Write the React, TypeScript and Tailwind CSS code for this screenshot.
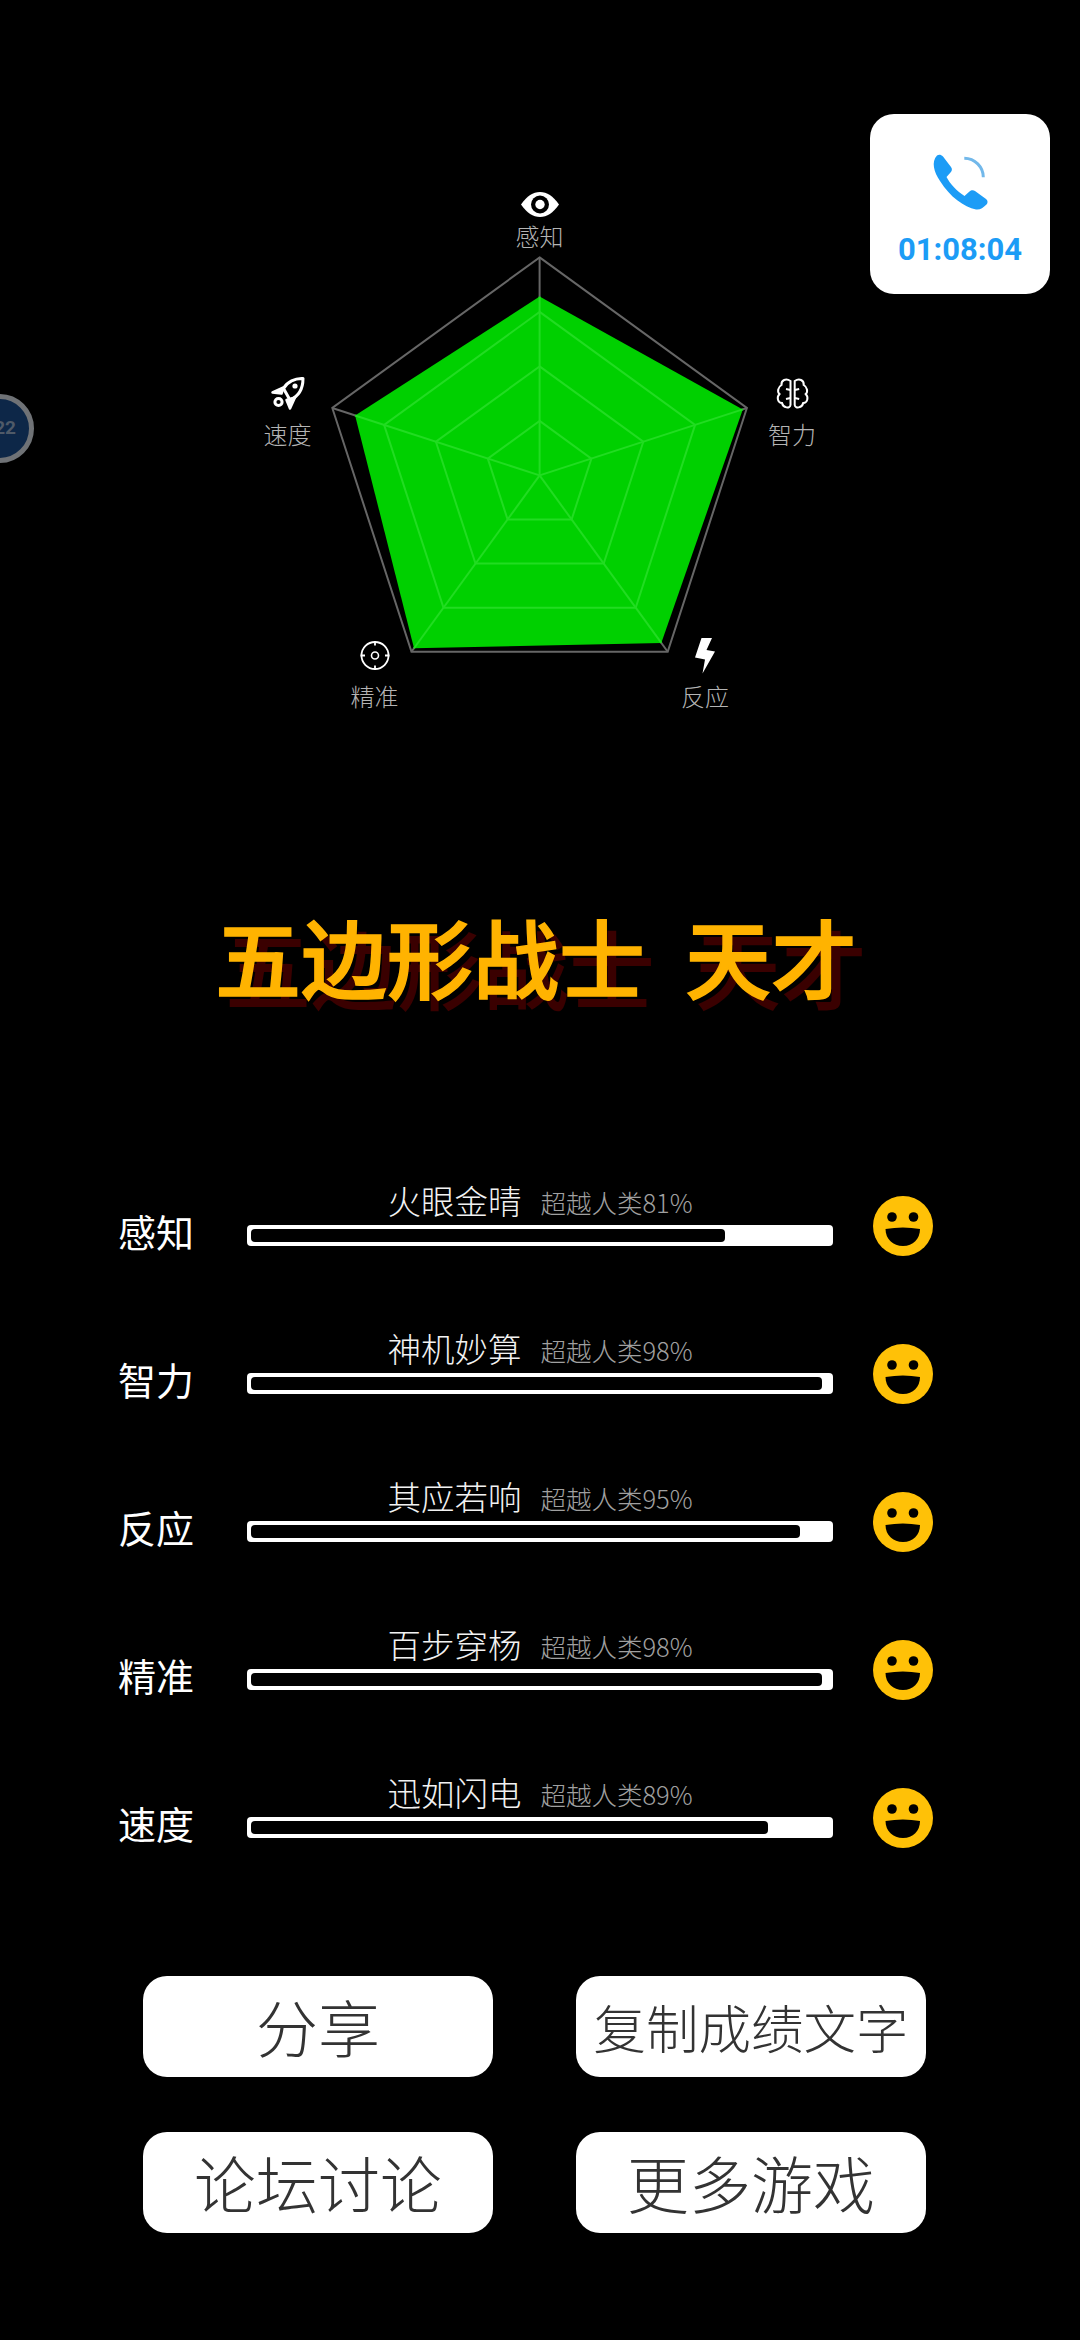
const cjk = "font-['Noto_Sans_CJK_SC',sans-serif]";

const CENTER = { x: 539.6, y: 475.4 };
const RADIUS = 218;

function vertex(index: number, ratio: number) {
  const angle = (-90 + index * 72) * (Math.PI / 180);
  return {
    x: CENTER.x + Math.cos(angle) * RADIUS * ratio,
    y: CENTER.y + Math.sin(angle) * RADIUS * ratio,
  };
}

function points(values: number[]) {
  return values
    .map((value, index) => {
      const p = vertex(index, value);
      return `${p.x.toFixed(1)},${p.y.toFixed(1)}`;
    })
    .join(" ");
}

const scores = [0.82, 0.98, 0.95, 0.98, 0.89];

const rows = [
  { label: "感知", title: "火眼金晴", percent: 81, fill: 82 },
  { label: "智力", title: "神机妙算", percent: 98, fill: 98.8 },
  { label: "反应", title: "其应若响", percent: 95, fill: 95 },
  { label: "精准", title: "百步穿杨", percent: 98, fill: 98.8 },
  { label: "速度", title: "迅如闪电", percent: 89, fill: 89.4 },
];

const axisLabels = [
  { text: "感知", x: 539.5, y: 246 },
  { text: "智力", x: 792, y: 444 },
  { text: "反应", x: 705, y: 706 },
  { text: "精准", x: 374.5, y: 706 },
  { text: "速度", x: 287.5, y: 444 },
];

function RadarChart() {
  return (
    <svg width="1080" height="760" viewBox="0 0 1080 760" className="block">
      <polygon points={points([1, 1, 1, 1, 1])} fill="none" stroke="#666666" strokeWidth="2" />
      {[0, 1, 2, 3, 4].map((i) => {
        const p = vertex(i, 1);
        return <line key={i} x1={CENTER.x} y1={CENTER.y} x2={p.x} y2={p.y} stroke="#666666" strokeWidth="2" />;
      })}
      <polygon points={points(scores)} fill="#00d000" />
      {[0.25, 0.5, 0.75].map((ring) => (
        <polygon key={ring} points={points([ring, ring, ring, ring, ring])} fill="none" stroke="#22dc22" strokeWidth="2" />
      ))}
      {scores.map((score, i) => {
        const p = vertex(i, score);
        return <line key={i} x1={CENTER.x} y1={CENTER.y} x2={p.x} y2={p.y} stroke="#22dc22" strokeWidth="2" />;
      })}

      {axisLabels.map((item) => (
        <text key={item.text} x={item.x} y={item.y} textAnchor="middle" fontSize="24" fontWeight="200" fill="#b4b4b4" className={cjk}>
          {item.text}
        </text>
      ))}

      {/* eye */}
      <path d="M521 204.5C527 196 533 192 540 192S553 196 559 204.5C553 213 547 217 540 217S527 213 521 204.5Z" fill="#fff" />
      <circle cx="540" cy="204.5" r="9" fill="#000" />
      <circle cx="540" cy="204.5" r="4.7" fill="#fff" />

      {/* rocket */}
      <g fill="none" stroke="#fff" strokeWidth="3" strokeLinejoin="round" strokeLinecap="round">
        <path d="M303 378.5C295 378 287 382 283.5 388.5L290 400C297 397 303 390 303 378.5Z" />
        <path d="M283.5 387.5L272.5 392.5L281.5 393.5Z" fill="#fff" strokeWidth="2.5" />
        <path d="M295 397.5L290 408.5L286.5 400Z" fill="#fff" strokeWidth="2.5" />
      </g>
      <circle cx="295" cy="386" r="2.6" fill="#fff" />
      <circle cx="278.5" cy="402" r="3.6" fill="none" stroke="#fff" strokeWidth="3" />

      {/* brain */}
      <g fill="none" stroke="#fff" strokeWidth="2">
        <path d="M790.5 381C786 378 781 380 781.5 385C778 387 777 392 779.5 394C776.5 397 777.5 403 782 403C783 408 790 409 790.5 405Z" />
        <path d="M790.5 390L786 389M790.5 398L786 399" />
      </g>
      <g fill="none" stroke="#fff" strokeWidth="2" transform="translate(1585.2 0) scale(-1 1)">
        <path d="M790.5 381C786 378 781 380 781.5 385C778 387 777 392 779.5 394C776.5 397 777.5 403 782 403C783 408 790 409 790.5 405Z" />
        <path d="M790.5 390L786 389M790.5 398L786 399" />
      </g>

      {/* target */}
      <circle cx="375" cy="655.5" r="13.5" fill="none" stroke="#fff" strokeWidth="1.8" />
      <circle cx="375" cy="655.5" r="3.5" fill="none" stroke="#fff" strokeWidth="1.6" />
      <path d="M375 641V645.5M375 665.5V670M360.5 655.5H365M385 655.5H389.5" stroke="#fff" strokeWidth="1.8" />

      {/* bolt */}
      <path d="M701.5 638H712L706.5 650L715 651.5L702.5 673.5L705 659.5L695 657.5Z" fill="#fff" />
    </svg>
  );
}

function Smiley() {
  return (
    <svg width="60" height="60" viewBox="0 0 60 60" className="mt-[15px] shrink-0">
      <circle cx="30" cy="30" r="30" fill="#ffc107" />
      <circle cx="19" cy="21" r="4.8" fill="#000" />
      <circle cx="40.5" cy="21" r="4.8" fill="#000" />
      <path d="M12.5 33Q30 30 47 33C47 43 40 50 30 50S12.5 43 12.5 33Z" fill="#000" />
    </svg>
  );
}

function StatRow({ label, title, percent, fill }: { label: string; title: string; percent: number; fill: number }) {
  return (
    <div className="flex h-[148px] items-start pl-[118px]">
      <div className="mt-[30px] w-[129px] shrink-0 text-[38px] leading-[40px] text-white">{label}</div>
      <div className="w-[586px] shrink-0">
        <div className="flex h-[40px] items-center justify-center gap-[19px]">
          <span className="-translate-y-px text-[33.5px] leading-[40px] font-light text-[#f2f2f2]">{title}</span>
          <span className="translate-y-px text-[25.5px] leading-[40px] font-light text-[#a0a0a0]">超越人类{percent}%</span>
        </div>
        <div className="mt-[4px] h-[21px] rounded-[4px] bg-white p-[4px]">
          <div className="h-[13px] rounded-[4px] bg-black" style={{ width: `${fill}%` }} />
        </div>
      </div>
      <div className="ml-[40px]">
        <Smiley />
      </div>
    </div>
  );
}

function ActionButton({ label, size }: { label: string; size: string }) {
  return (
    <button type="button" className={`h-[101px] w-[350px] rounded-[24px] bg-white font-extralight text-[#333333] ${size}`}>
      {label}
    </button>
  );
}

export default function App() {
  return (
    <div className={`relative h-[2340px] w-[1080px] overflow-hidden bg-black ${cjk}`}>
      <RadarChart />

      <div className="mt-[151px] flex h-[90px] items-center justify-center gap-[40px] pr-[8px] text-[86px] leading-[90px] font-medium text-[#ffb300] [-webkit-text-stroke:1.5px_#ffb300] [text-shadow:10px_11px_0_#3a0000]">
        <span>五边形战士</span>
        <span>天才</span>
      </div>

      <div className="mt-[180px]">
        {rows.map((row) => (
          <StatRow key={row.label} {...row} />
        ))}
      </div>

      <div className="mt-[55px] ml-[143px] grid grid-cols-[350px_350px] gap-x-[83px] gap-y-[55px]">
        <ActionButton label="分享" size="text-[62px]" />
        <ActionButton label="复制成绩文字" size="text-[52.5px]" />
        <ActionButton label="论坛讨论" size="text-[62px]" />
        <ActionButton label="更多游戏" size="text-[62px]" />
      </div>

      {/* call pill */}
      <div className="absolute top-[114px] left-[870px] flex h-[180px] w-[180px] flex-col items-center rounded-[24px] bg-white pt-[39px]">
        <svg width="58" height="58" viewBox="0 0 58 58" className="block">
          <path
            d="M6 2.5C8 1 10 1.5 12 3.5L20 14C21.5 16 21 18 19.5 19.5L15.5 24C19 31 26 38 33.5 43L38.5 38.5C40 37 42.5 37 44 38L55 46C57 47.5 57 50 55.5 51.5C52 55 49 57 45 56.5C33 54 19 44 9 28C3 19 0 9 6 2.5Z"
            fill="#1c9cf6"
          />
          <path d="M33.3 5.3A19 19 0 0 1 52.3 24.3" fill="none" stroke="#72b8ea" strokeWidth="3" />
        </svg>
        <div className="mt-[19px] font-['Roboto',sans-serif] text-[31px] leading-[40px] font-bold text-[#1c9cf6]">01:08:04</div>
      </div>

      {/* floating bubble */}
      <div className="absolute top-[394px] left-[-35px] flex h-[69px] w-[69px] items-center justify-end rounded-full border-[5px] border-[#6f7276] bg-[#0d2748] pr-[13px]">
        <span className="font-['Roboto',sans-serif] text-[19px] font-bold text-[#4f5a68]">22</span>
      </div>
    </div>
  );
}
